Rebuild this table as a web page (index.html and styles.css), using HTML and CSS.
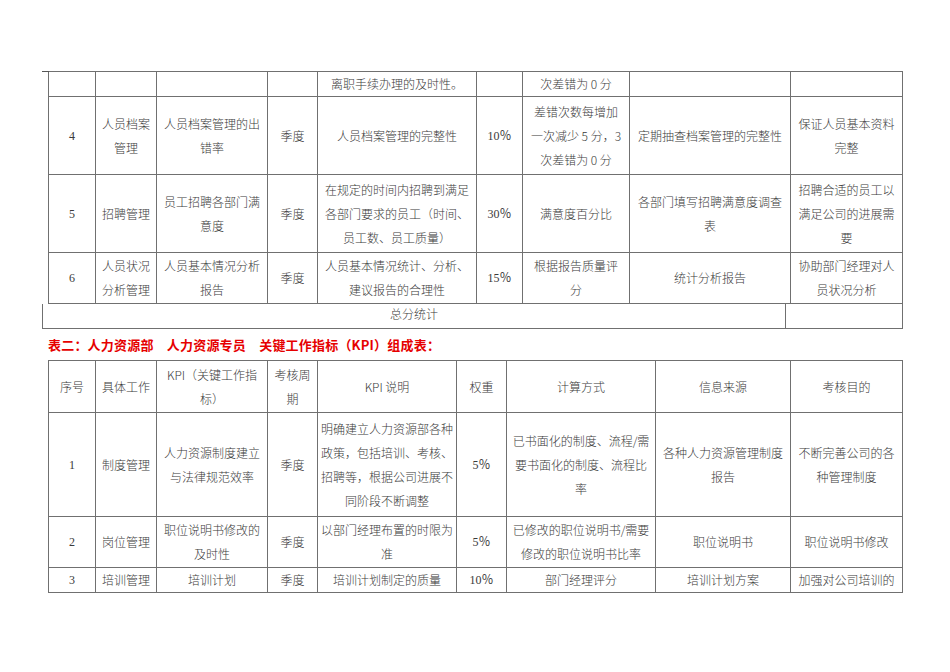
FILE: index.html
```html
<!DOCTYPE html>
<html lang="zh-CN">
<head>
<meta charset="utf-8">
<link rel="stylesheet" href="styles.css">
</head>
<body>
<div class="page">
  <div class="t1wrap">
    <table class="grid t1">
      <colgroup>
        <col class="w47"><col class="w61"><col class="w111"><col class="w50"><col class="w159"><col class="w46"><col class="w107"><col class="w161"><col class="w112">
      </colgroup>
      <tr class="h24">
        <td></td><td></td><td></td><td></td><td>离职手续办理的及时性。</td><td></td><td>次差错为 0 分</td><td></td><td></td>
      </tr>
      <tr class="h78">
        <td class="num">4</td><td>人员档案<br>管理</td><td>人员档案管理的出<br>错率</td><td>季度</td><td>人员档案管理的完整性</td><td class="num">10％</td><td>差错次数每增加<br>一次减少 5 分，3<br>次差错为 0 分</td><td>定期抽查档案管理的完整性</td><td>保证人员基本资料<br>完整</td>
      </tr>
      <tr class="h78">
        <td class="num">5</td><td>招聘管理</td><td>员工招聘各部门满<br>意度</td><td>季度</td><td>在规定的时间内招聘到满足<br>各部门要求的员工（时间、<br>员工数、员工质量）</td><td class="num">30％</td><td>满意度百分比</td><td>各部门填写招聘满意度调查<br>表</td><td>招聘合适的员工以<br>满足公司的进展需<br>要</td>
      </tr>
      <tr class="h51">
        <td class="num">6</td><td>人员状况<br>分析管理</td><td>人员基本情况分析<br>报告</td><td>季度</td><td>人员基本情况统计、分析、<br>建议报告的合理性</td><td class="num">15％</td><td>根据报告质量评<br>分</td><td>统计分析报告</td><td>协助部门经理对人<br>员状况分析</td>
      </tr>
    </table>
    <div class="total">
      <div class="total-label">总分统计</div>
      <div class="total-value"></div>
    </div>
  </div>

  <h2 class="heading">表二：人力资源部　人力资源专员　关键工作指标（KPI）组成表：</h2>

  <table class="grid t2">
    <colgroup>
      <col class="w47"><col class="w61"><col class="w111"><col class="w50"><col class="w139"><col class="w50"><col class="w149"><col class="w135"><col class="w112">
    </colgroup>
    <tr class="h52">
      <td>序号</td><td>具体工作</td><td>KPI（关键工作指<br>标）</td><td>考核周<br>期</td><td>KPI 说明</td><td>权重</td><td>计算方式</td><td>信息来源</td><td>考核目的</td>
    </tr>
    <tr class="h104">
      <td class="num">1</td><td>制度管理</td><td>人力资源制度建立<br>与法律规范效率</td><td>季度</td><td>明确建立人力资源部各种<br>政策，包括培训、考核、<br>招聘等，根据公司进展不<br>同阶段不断调整</td><td class="num">5％</td><td>已书面化的制度、流程/需<br>要书面化的制度、流程比<br>率</td><td>各种人力资源管理制度<br>报告</td><td>不断完善公司的各<br>种管理制度</td>
    </tr>
    <tr class="h51">
      <td class="num">2</td><td>岗位管理</td><td>职位说明书修改的<br>及时性</td><td>季度</td><td>以部门经理布置的时限为<br>准</td><td class="num">5％</td><td>已修改的职位说明书/需要<br>修改的职位说明书比率</td><td>职位说明书</td><td>职位说明书修改</td>
    </tr>
    <tr class="h23">
      <td class="num">3</td><td>培训管理</td><td>培训计划</td><td>季度</td><td>培训计划制定的质量</td><td class="num">10％</td><td>部门经理评分</td><td>培训计划方案</td><td>加强对公司培训的</td>
    </tr>
  </table>
</div>
</body>
</html>
```

FILE: styles.css
```css
html, body {
  margin: 0;
  padding: 0;
  background: #ffffff;
}

body {
  font-family: "Liberation Serif", "Noto Sans CJK SC", serif;
  font-size: 12px;
  color: #333333;
}

.page {
  padding: 71px 0 0 48px;
  width: 855px;
}

.t1wrap {
  position: relative;
}

.t1wrap::before {
  content: "";
  position: absolute;
  left: -6px;
  top: 0;
  width: 7px;
  height: 1px;
  background: #555555;
}

.grid {
  border-collapse: collapse;
  table-layout: fixed;
  width: 855px;
}

.grid td {
  border: 1px solid #707070;
  padding: 0;
  text-align: center;
  vertical-align: middle;
  line-height: 24px;
  white-space: nowrap;
  overflow: visible;
  font-family: "Noto Sans CJK SC", sans-serif;
  font-weight: 300;
  color: #3a3a3a;
}

.grid td.num {
  font-family: "Liberation Serif", "Noto Sans CJK SC", serif;
  font-weight: 400;
}

.w46 { width: 46px; }
.w47 { width: 47px; }
.w50 { width: 50px; }
.w61 { width: 61px; }
.w107 { width: 107px; }
.w111 { width: 111px; }
.w112 { width: 112px; }
.w135 { width: 135px; }
.w139 { width: 139px; }
.w149 { width: 149px; }
.w159 { width: 159px; }
.w161 { width: 161px; }

.h23 { height: 23px; }
.h24 { height: 24px; }
.h51 { height: 51px; }
.h52 { height: 52px; }
.h78 { height: 78px; }
.h104 { height: 104px; }

.total {
  display: flex;
  margin-left: -6px;
  width: 861px;
  height: 25px;
  border: 1px solid #707070;
  border-top: none;
  box-sizing: border-box;
}

.total-label {
  width: 742px;
  border-right: 1px solid #707070;
  text-align: center;
  line-height: 20px;
  font-family: "Noto Sans CJK SC", sans-serif;
  font-weight: 300;
  color: #3a3a3a;
}

.total-value {
  flex: 1;
}

.heading {
  margin: 5px 0 0 0;
  height: 26px;
  line-height: 22px;
  font-size: 13px;
  font-weight: 700;
  color: #e60000;
  font-family: "Noto Sans CJK SC", sans-serif;
  letter-spacing: 0.2px;
}
```
